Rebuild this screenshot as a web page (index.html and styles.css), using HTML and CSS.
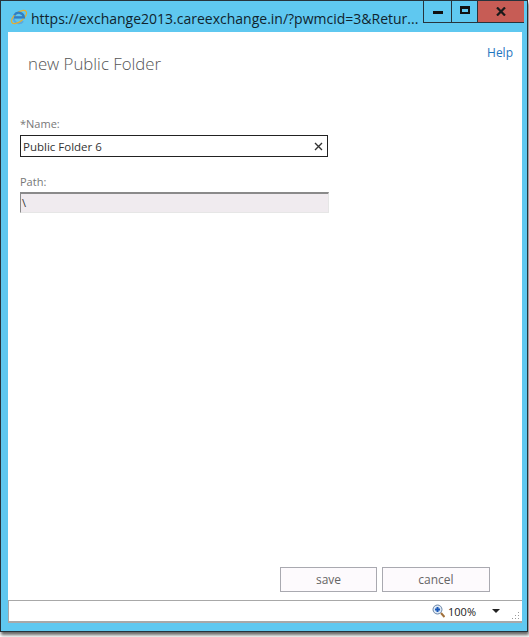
FILE: index.html
```html
<!DOCTYPE html>
<html lang="en">
<head>
    <meta charset="UTF-8">
    <meta name="viewport" content="width=device-width, initial-scale=1.0">
    <title>new Public Folder</title>
    <link rel="stylesheet" href="styles.css">
</head>
<body>
    <div class="window">
        <div class="titlebar">
            <svg class="ie-logo" width="18" height="18" viewBox="0 0 20 20">
                <path d="M4.500 10.500h11A5.800 5.800 0 1 0 14.500 14.500" fill="none" stroke="#5aa9e0" stroke-width="2.400"/>
                <ellipse cx="10" cy="10" rx="10" ry="4.800" transform="rotate(-38 10 10)" fill="none" stroke="#e3ae32" stroke-width="1.400"/>
                <path d="M4.500 10.500h11A5.800 5.800 0 0 0 4.800 8" fill="none" stroke="#2f7fc4" stroke-width="2.400"/>
            </svg>
            <span class="title-text">https://exchange2013.careexchange.in/?pwmcid=3&amp;Retur...</span>
            <div class="caption-buttons">
                <div class="cap-btn cap-min"><span class="min-glyph"></span></div>
                <div class="cap-btn cap-max"><span class="max-glyph"></span></div>
                <div class="cap-btn cap-close">
                    <svg width="10" height="9" viewBox="0 0 10 9"><path d="M1 .5l8 8M9 .5l-8 8" stroke="#1a1a1a" stroke-width="2.200" fill="none"/></svg>
                </div>
            </div>
        </div>
        <div class="content">
            <div class="header">
                <h1 class="page-title">new Public Folder</h1>
                <a class="help-link">Help</a>
            </div>
            <div class="form">
                <label class="field-label">*Name:</label>
                <div class="name-input">
                    <span>Public Folder 6</span>
                    <svg width="9" height="9" viewBox="0 0 9 9"><path d="M1 1l7 7M8 1l-7 7" stroke="#333" stroke-width="1.400" fill="none"/></svg>
                </div>
                <label class="field-label path-label">Path:</label>
                <div class="path-input">\</div>
            </div>
            <div class="actions">
                <button class="action-btn save-btn">save</button>
                <button class="action-btn cancel-btn">cancel</button>
            </div>
        </div>
        <div class="statusbar">
            <svg class="zoom-icon" width="13" height="14" viewBox="0 0 13 14">
                <circle cx="5.500" cy="5.500" r="4.500" fill="#dce8f5" stroke="#6d86a6"/>
                <path d="M3 5.500h5M5.500 3v5" stroke="#1a58b8" stroke-width="2"/>
                <path d="M9 9l3.500 4" stroke="#a0703c" stroke-width="2"/>
            </svg>
            <span class="zoom-text">100%</span>
            <span class="zoom-arrow"></span>
            <svg class="resize-grip" width="8" height="8" viewBox="0 0 8 8">
                <path d="M6 0h1v1H6zM3 3h1v1H3zM6 3h1v1H6zM0 6h1v1H0zM3 6h1v1H3zM6 6h1v1H6z" fill="#9a9a9a"/>
            </svg>
        </div>
    </div>
</body>
</html>
```

FILE: styles.css
```css
html, body {
    margin: 0;
    height: 100%;
    background: #fff;
    overflow: hidden;
}
.window {
    box-sizing: border-box;
    width: 528px;
    height: 632px;
    display: flex;
    flex-direction: column;
    padding: 0 5px 8px 7px;
    background: #5fc8f0;
    border: 1px solid #27333c;
    box-shadow: 1px 3px 3px rgba(0, 0, 0, 0.6);
}
.titlebar {
    height: 31px;
    flex: none;
    display: flex;
    align-items: flex-start;
    font-family: "Open Sans", sans-serif;
    font-size: 14px;
    color: #10242e;
}
.ie-logo {
    margin: 7px 3px 0 2px;
    flex: none;
}
.title-text {
    margin-top: 8px;
    white-space: nowrap;
    flex: 1;
    overflow: visible;
}
.caption-buttons {
    display: flex;
    height: 22px;
    margin-right: -2px;
    flex: none;
}
.cap-btn {
    box-sizing: border-box;
    height: 22px;
    display: flex;
    align-items: center;
    justify-content: center;
    border: 1px solid #27333c;
    border-top: none;
}
.cap-min {
    width: 29px;
}
.cap-max {
    width: 26px;
    border-left: none;
}
.cap-close {
    width: 46px;
    background: #c75c55;
    border: none;
    border-bottom: 1px solid #27333c;
}
.min-glyph {
    width: 10px;
    height: 3px;
    background: #111;
    margin-top: 2px;
}
.max-glyph {
    box-sizing: border-box;
    width: 10px;
    height: 8px;
    border: 2px solid #111;
    border-top-width: 3px;
    margin-top: -3px;
}
.content {
    flex: 1;
    display: flex;
    flex-direction: column;
    background: #fff;
    font-family: "Open Sans", sans-serif;
}
.header {
    display: flex;
    justify-content: space-between;
    align-items: flex-start;
    padding: 13px 9px 0 20px;
}
.help-link {
    font-size: 12px;
    line-height: 16px;
    color: #1f76c0;
}
.page-title {
    margin: 7px 0 0 0;
    font-size: 16.8px;
    line-height: 24px;
    font-weight: 300;
    color: #555;
}
.form {
    margin: 40px 0 0 12px;
    width: 308px;
    display: flex;
    flex-direction: column;
}
.field-label {
    font-size: 11px;
    line-height: 15px;
    color: #777;
}
.name-input {
    box-sizing: border-box;
    height: 22px;
    margin-top: 4px;
    padding: 0 4px 0 2px;
    display: flex;
    align-items: center;
    justify-content: space-between;
    border: 1px solid #222;
    font-size: 11.5px;
    color: #333;
}
.path-label {
    margin-top: 17px;
}
.path-input {
    box-sizing: border-box;
    height: 21px;
    margin-top: 3px;
    margin-right: -1px;
    padding-left: 1px;
    background: #f0ebef;
    border-top: 2px solid #8a8a8a;
    border-left: 1px solid #8a8a8a;
    border-right: 1px solid #e6e6e6;
    border-bottom: 1px solid #e6e6e6;
    font-size: 11px;
    line-height: 17px;
    color: #333;
}
.actions {
    margin-top: auto;
    display: flex;
    justify-content: flex-end;
    gap: 5px;
    padding: 0 32px 8px 0;
}
.action-btn {
    box-sizing: border-box;
    height: 25px;
    padding: 0;
    background: #fdfafd;
    border: 1px solid #a9a9b0;
    font-family: "Open Sans", sans-serif;
    font-size: 12px;
    color: #666;
}
.save-btn {
    width: 97px;
}
.cancel-btn {
    width: 108px;
}
.statusbar {
    box-sizing: border-box;
    height: 23px;
    flex: none;
    display: flex;
    align-items: center;
    justify-content: flex-end;
    padding-right: 2px;
    background: #fff;
    border-top: 1px solid #a8a8a8;
    border-bottom: 2px solid #a8a8a8;
    border-left: 1px solid #a8a8a8;
    font-family: "Open Sans", sans-serif;
    font-size: 11px;
    color: #222;
}
.zoom-icon {
    margin-right: 3px;
}
.zoom-text {
    margin-right: 16px;
}
.zoom-arrow {
    width: 0;
    height: 0;
    border-left: 4px solid transparent;
    border-right: 4px solid transparent;
    border-top: 4px solid #222;
}
.resize-grip {
    margin-left: 12px;
    align-self: flex-end;
    margin-bottom: 1px;
}
```
